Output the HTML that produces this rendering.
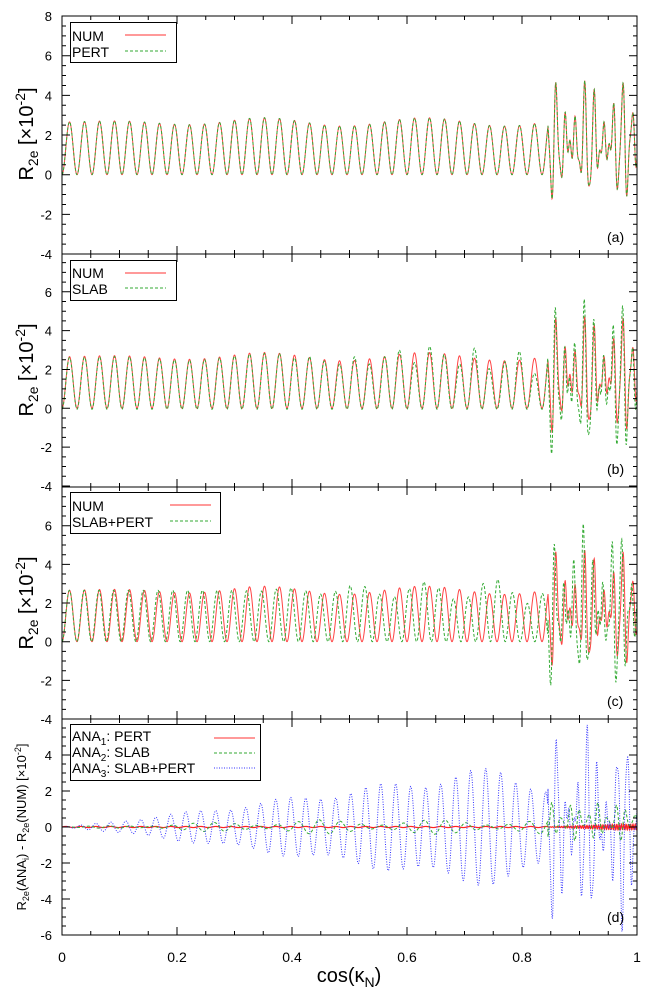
<!DOCTYPE html>
<html><head><meta charset="utf-8"><style>
html,body{margin:0;padding:0;background:#fff;}
svg{display:block;font-family:"Liberation Sans",sans-serif;}
</style></head><body>
<svg id="s" width="664" height="998" viewBox="0 0 664 998" xmlns="http://www.w3.org/2000/svg">
<defs>
<clipPath id="ca"><rect x="62" y="16" width="575" height="238"/></clipPath>
<clipPath id="cb"><rect x="62" y="254" width="575" height="233"/></clipPath>
<clipPath id="cc"><rect x="62" y="487" width="575" height="232"/></clipPath>
<clipPath id="cd"><rect x="62" y="719" width="575" height="216"/></clipPath>
</defs>
<g id="curves"></g>
<g id="axes" stroke="#000" stroke-width="1" fill="none"></g>
<g id="labels" font-size="13" fill="#000"></g>
<g font-size="14" fill="#000">
<rect x="70.5" y="22.5" width="106" height="40" fill="#fff" stroke="#000"/>
<text x="72" y="41">NUM</text><text x="72" y="57">PERT</text>
<line x1="125" y1="35" x2="166" y2="35" stroke="#f33" stroke-width="1"/>
<line x1="125" y1="51" x2="166" y2="51" stroke="#3a3" stroke-width="1" stroke-dasharray="3,2"/>

<rect x="70.5" y="260.5" width="106" height="40" fill="#fff" stroke="#000"/>
<text x="72" y="278">NUM</text><text x="72" y="294">SLAB</text>
<line x1="125" y1="273" x2="166" y2="273" stroke="#f33"/>
<line x1="125" y1="288" x2="166" y2="288" stroke="#3a3" stroke-dasharray="3,2"/>

<rect x="70.5" y="492.5" width="150" height="41" fill="#fff" stroke="#000"/>
<text x="72" y="511">NUM</text><text x="72" y="527">SLAB+PERT</text>
<line x1="170" y1="505" x2="211" y2="505" stroke="#f33"/>
<line x1="170" y1="521" x2="211" y2="521" stroke="#3a3" stroke-dasharray="3,2"/>

<rect x="70.5" y="724.5" width="190" height="56" fill="#fff" stroke="#000"/>
<text x="72" y="741">ANA<tspan font-size="10" dy="4">1</tspan><tspan dy="-4">: PERT</tspan></text>
<text x="72" y="757">ANA<tspan font-size="10" dy="4">2</tspan><tspan dy="-4">: SLAB</tspan></text>
<text x="72" y="773">ANA<tspan font-size="10" dy="4">3</tspan><tspan dy="-4">: SLAB+PERT</tspan></text>
<line x1="214" y1="738" x2="255" y2="738" stroke="#f33"/>
<line x1="214" y1="753" x2="255" y2="753" stroke="#3a3" stroke-dasharray="3,2"/>
<line x1="214" y1="768" x2="255" y2="768" stroke="#33f" stroke-dasharray="1,1.5"/>
</g>
<g font-size="14" fill="#000">
<text x="607" y="242">(a)</text><text x="607" y="474">(b)</text><text x="607" y="706">(c)</text><text x="607" y="922">(d)</text>
</g>
<g font-size="20" fill="#000">
<text transform="translate(33,134) rotate(-90)" text-anchor="middle">R<tspan font-size="14" dy="5">2e</tspan><tspan dy="-5"> [×10</tspan><tspan font-size="14" dy="-8">-2</tspan><tspan dy="8">]</tspan></text>
<text transform="translate(33,370) rotate(-90)" text-anchor="middle">R<tspan font-size="14" dy="5">2e</tspan><tspan dy="-5"> [×10</tspan><tspan font-size="14" dy="-8">-2</tspan><tspan dy="8">]</tspan></text>
<text transform="translate(33,603) rotate(-90)" text-anchor="middle">R<tspan font-size="14" dy="5">2e</tspan><tspan dy="-5"> [×10</tspan><tspan font-size="14" dy="-8">-2</tspan><tspan dy="8">]</tspan></text>
<text transform="translate(26,827) rotate(-90)" text-anchor="middle" font-size="13">R<tspan font-size="9" dy="3">2e</tspan><tspan dy="-3">(ANA</tspan><tspan font-size="9" dy="3">i</tspan><tspan dy="-3">) - R</tspan><tspan font-size="9" dy="3">2e</tspan><tspan dy="-3">(NUM) [×10</tspan><tspan font-size="9" dy="-5">-2</tspan><tspan dy="5">]</tspan></text>
<text x="349" y="982" text-anchor="middle">cos(κ<tspan font-size="14" dy="5">N</tspan><tspan dy="-5">)</tspan></text>
</g>
</svg>
<script>
(function(){
var NS="http://www.w3.org/2000/svg";
var X0=62,W=575;
var P=[{top:16,bot:254,z:174.7,u:19.83,labs:[8,6,4,2,0,-2,-4],clip:'ca'},
{top:254,bot:487,z:408.3,u:19.42,labs:[6,4,2,0,-2,-4],clip:'cb'},
{top:487,bot:719,z:641.7,u:19.33,labs:[6,4,2,0,-2,-4],clip:'cc'},
{top:719,bot:935,z:827,u:18.0,labs:[4,2,0,-2,-4,-6],clip:'cd'}];
var ax=document.getElementById('axes'),lb=document.getElementById('labels'),cv=document.getElementById('curves');
function el(t,a,p){var e=document.createElementNS(NS,t);for(var k in a)e.setAttribute(k,a[k]);(p||ax).appendChild(e);return e;}
var d="";
P.forEach(function(p,i){
 d+="M"+X0+" "+p.top+"H"+(X0+W)+"V"+p.bot+"H"+X0+"Z";
 for(var k=0;k<=20;k++){var x=X0+k*W/20;var L=(k%4==0)?8:4;
  d+="M"+x+" "+p.top+"v"+L+"M"+x+" "+p.bot+"v-"+L;}
 for(var v=-6;v<=8;v+=0.5){var y=p.z-v*p.u;if(y<p.top-0.5||y>p.bot+0.5)continue;var L=(v%2==0)?8:4;
  d+="M"+X0+" "+y+"h"+L+"M"+(X0+W)+" "+y+"h-"+L;}
 p.labs.forEach(function(v){var y=p.z-v*p.u;var t=el('text',{x:52,y:y+5,'text-anchor':'end'},lb);t.textContent=v;});
});
el('path',{d:d});
[0,0.2,0.4,0.6,0.8,1].forEach(function(v){var t=el('text',{x:X0+v*W,y:962,'text-anchor':'middle','font-size':'14'},lb);t.textContent=v;});
var T=15/575;
function base(x,per,ph){return 1.33*(1-Math.cos(2*Math.PI*x/(per||T)+(ph||0)));}
function env(x){return 1+0.08*Math.sin(2*Math.PI*x/0.28)*Math.min(1,x*3);}
function chaos(x,s){var a=2*Math.PI*x;return 1.6+2.3*Math.sin(a/0.0165+1+s)*(0.7+0.5*Math.sin(a/0.06+s))+0.6*Math.sin(a/0.0085+2+s*2);}
function num(x){return x<0.845?base(x)*env(x):chaos(x,0);}
function mk(f,p,col,dash,w){var s="";for(var i=0;i<=2300;i++){var x=i/2300;var y=p.z-f(x)*p.u;s+=(i?"L":"M")+(X0+x*W).toFixed(2)+" "+y.toFixed(2);}
 var a={d:s,fill:'none',stroke:col,'stroke-width':w||1,'clip-path':'url(#'+p.clip+')'};if(dash)a['stroke-dasharray']=dash;el('path',a,cv);}
mk(num,P[0],'#f44');mk(num,P[0],'#3a3','3,2');
mk(num,P[1],'#f44');
mk(function(x){if(x<0.845)return num(x)*(1+0.3*Math.max(0,x-0.35)*Math.sin(2*Math.PI*x/0.07)*2)-0.05;return chaos(x,0.3)*1.3-0.7;},P[1],'#3a3','3,2');
mk(num,P[2],'#f44');
mk(function(x){if(x<0.845)return base(x,T*0.985,0)*(1+0.25*Math.max(0,x-0.3)*2*Math.sin(2*Math.PI*x/0.12));return chaos(x,0.9)*1.35-0.6;},P[2],'#3a3','3,2');
mk(function(x){if(x<0.845)return 0.03*Math.sin(2*Math.PI*x/T);return 0.15*Math.sin(2*Math.PI*x/0.004)*Math.min(1,(x-0.84)*8);},P[3],'#f22','',1.2);
mk(function(x){if(x<0.845)return 0.25*Math.min(1,x*2.5)*Math.sin(2*Math.PI*x/(T*1.4))*(1+0.6*Math.sin(2*Math.PI*x/0.2));return 0.9*Math.sin(2*Math.PI*x/0.016)*(0.7+0.5*Math.sin(2*Math.PI*x/0.04))+0.3;},P[3],'#3a3','3,2');
mk(function(x){if(x<0.845){var A=0.7*Math.pow(x/0.2,1.1)*(1+0.12*Math.sin(2*Math.PI*x/0.17));if(x>0.76)A*=1-(x-0.76)*5;return A*Math.sin(2*Math.PI*x/T);}
 var a=2*Math.PI*x;return 4.8*Math.sin(a/0.0175+0.5)*(0.6+0.45*Math.sin(a/0.06))+0.8*Math.sin(a/0.008);},P[3],'#33f','1,1.5');
})();
</script>
</body></html>
